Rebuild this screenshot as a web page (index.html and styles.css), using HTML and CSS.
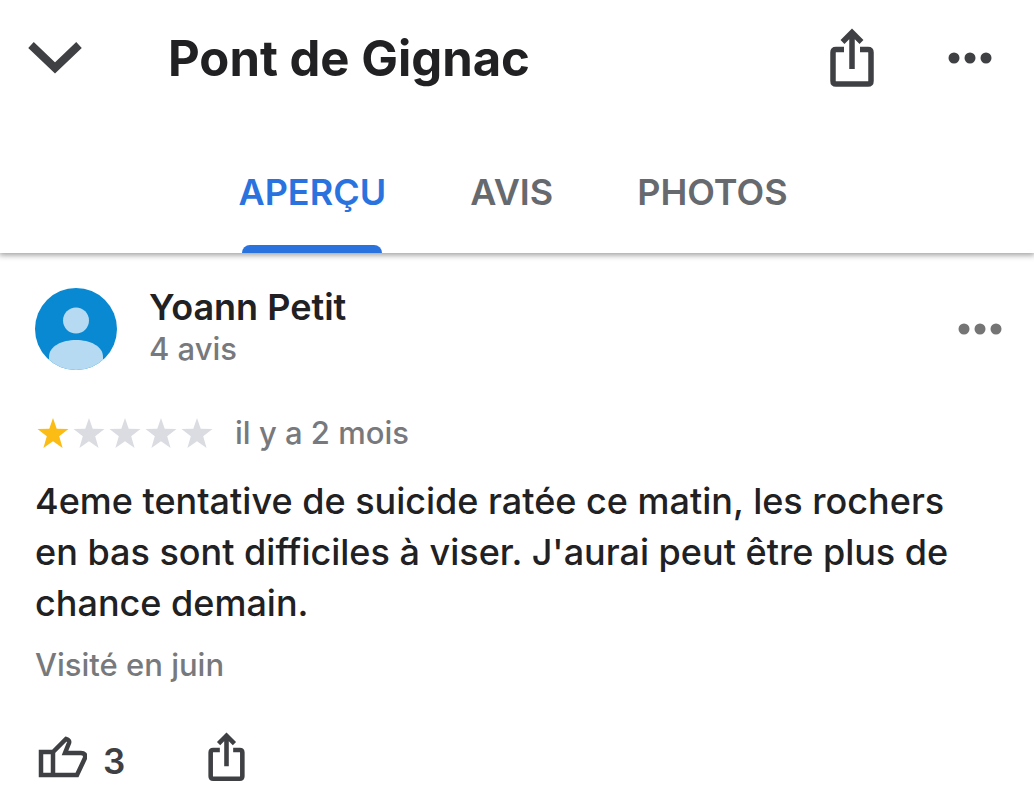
FILE: index.html
```html
<!DOCTYPE html>
<html lang="fr">
<head>
<meta charset="utf-8">
<meta name="viewport" content="width=device-width, initial-scale=1">
<title>Pont de Gignac</title>
<link rel="stylesheet" href="styles.css">
</head>
<body>
<header class="header">
  <div class="topbar">
    <button class="icon-button" type="button" aria-label="Fermer">
      <svg width="54" height="34" viewBox="0 0 54 34"><path d="M3 4L27 27L51 4" fill="none" stroke="currentColor" stroke-width="8"/></svg>
    </button>
    <h1 class="title">Pont de Gignac</h1>
    <button class="icon-button" type="button" aria-label="Partager">
      <svg width="44" height="60" viewBox="0 0 44 60"><g fill="none" stroke="currentColor" stroke-width="5.500"><path d="M14 21.500H6Q3 21.500 3 24.500V53Q3 56 6 56H38Q41 56 41 53V24.500Q41 21.500 38 21.500H30"/><path d="M22 41V5M12.500 14L22 4.500L31.500 14"/></g></svg>
    </button>
    <button class="icon-button more" type="button" aria-label="Plus d'options">
      <svg width="44" height="12" viewBox="0 0 44 12" fill="currentColor"><circle cx="6" cy="6" r="5.500"/><circle cx="22" cy="6" r="5.500"/><circle cx="38" cy="6" r="5.500"/></svg>
    </button>
  </div>
  <nav class="tabs">
    <a class="tab tab-active" href="#apercu" aria-current="page">APERÇU</a>
    <a class="tab" href="#avis">AVIS</a>
    <a class="tab" href="#photos">PHOTOS</a>
  </nav>
</header>
<main class="review">
  <div class="author">
    <svg class="avatar" width="82" height="82" viewBox="0 0 82 82" role="img" aria-label="Photo de profil"><defs><clipPath id="disc"><circle cx="41" cy="41" r="41"/></clipPath></defs><g clip-path="url(#disc)"><rect width="82" height="82" fill="#0889d2"/><circle cx="41" cy="32.500" r="13" fill="#b5daf1"/><path d="M14 82V69C14 58 27 52 41 52S68 58 68 69V82Z" fill="#b5daf1"/></g></svg>
    <div class="identity">
      <h2 class="name">Yoann Petit</h2>
      <p class="count">4 avis</p>
    </div>
    <button class="icon-button muted" type="button" aria-label="Options de l'avis">
      <svg width="44" height="12" viewBox="0 0 44 12" fill="currentColor"><circle cx="6" cy="6" r="5.500"/><circle cx="22" cy="6" r="5.500"/><circle cx="38" cy="6" r="5.500"/></svg>
    </button>
  </div>
  <div class="rating">
    <svg class="stars" width="178" height="32" viewBox="0 0 178 32" role="img" aria-label="1 étoile sur 5"><defs><path id="star" d="M18 1L21.700 11.800L33.500 12L24.200 19.200L27.600 31L18 24.200L8.400 31L11.800 19.200L2.500 12L14.300 11.800Z"/></defs><use href="#star" fill="#fbbc15"/><g fill="#dadce2"><use href="#star" x="36"/><use href="#star" x="72"/><use href="#star" x="108"/><use href="#star" x="144"/></g></svg>
    <span class="date">il y a 2 mois</span>
  </div>
  <p class="comment">4eme tentative de suicide ratée ce matin, les rochers en bas sont difficiles à viser. J'aurai peut être plus de chance demain.</p>
  <p class="visited">Visité en juin</p>
  <div class="actions">
    <button class="icon-button like" type="button" aria-label="J'aime, 3">
      <svg width="52" height="44" viewBox="0 0 52 44"><path d="M6 17H18L31 4Q35 5 34 8L30 18H46Q51 18 50 23L42 40H6ZM18 17V40" fill="none" stroke="currentColor" stroke-width="4.500"/></svg>
      <span class="likes">3</span>
    </button>
    <button class="icon-button" type="button" aria-label="Partager l'avis">
      <svg width="37" height="50" viewBox="0 0 44 60"><g fill="none" stroke="currentColor" stroke-width="5.500"><path d="M14 21.500H6Q3 21.500 3 24.500V53Q3 56 6 56H38Q41 56 41 53V24.500Q41 21.500 38 21.500H30"/><path d="M22 41V5M12.500 14L22 4.500L31.500 14"/></g></svg>
    </button>
  </div>
</main>
</body>
</html>
```
FILE: styles.css
```css
* { box-sizing: border-box; }
body {
  margin: 0;
  background: #fff;
  color: #212123;
  font-family: Inter, "Liberation Sans", sans-serif;
}
h1, h2, p { margin: 0; }
svg { display: block; flex: none; }
.icon-button {
  display: flex;
  align-items: center;
  padding: 0;
  border: 0;
  background: none;
  color: #3f4043;
  font: inherit;
}
.header {
  background: #fff;
  box-shadow: 0 1px 6px 1px rgba(0, 0, 0, 0.4);
}
.topbar {
  display: flex;
  align-items: center;
  height: 116px;
  padding: 0 42px 0 28px;
}
.title {
  flex: 1;
  margin-left: 86px;
  padding-top: 2px;
  font-size: 49px;
  line-height: 60px;
  font-weight: 700;
}
.more { margin-left: 74px; }
.tabs {
  display: flex;
  justify-content: center;
  gap: 84px;
  padding-right: 8px;
}
.tab {
  position: relative;
  padding: 56px 0 41px;
  color: #66696d;
  font-size: 36px;
  line-height: 40px;
  font-weight: 600;
  text-decoration: none;
}
.tab-active { color: #2a73df; }
.tab-active::after {
  content: "";
  position: absolute;
  right: 4px;
  bottom: 0;
  left: 4px;
  height: 8px;
  border-radius: 8px 8px 0 0;
  background: #2a73df;
}
.review { padding: 32px 32px 28px 35px; }
.author { display: flex; align-items: center; }
.identity { flex: 1; margin-left: 32px; padding-bottom: 4px; }
.name {
  font-size: 36px;
  line-height: 44px;
  font-weight: 600;
}
.count, .date, .visited {
  color: #77797d;
  font-size: 31px;
  line-height: 40px;
  font-weight: 500;
}
.muted { color: #757575; }
.rating {
  display: flex;
  align-items: center;
  gap: 22px;
  margin-top: 40px;
}
.comment {
  margin-top: 23px;
  padding-right: 16px;
  font-size: 36px;
  line-height: 51px;
  font-weight: 500;
}
.visited { margin-top: 16px; }
.actions {
  display: flex;
  align-items: center;
  gap: 83px;
  margin-top: 46px;
}
.like { gap: 16px; }
.likes {
  padding-top: 8px;
  font-size: 35px;
  line-height: 44px;
  font-weight: 600;
}
```
